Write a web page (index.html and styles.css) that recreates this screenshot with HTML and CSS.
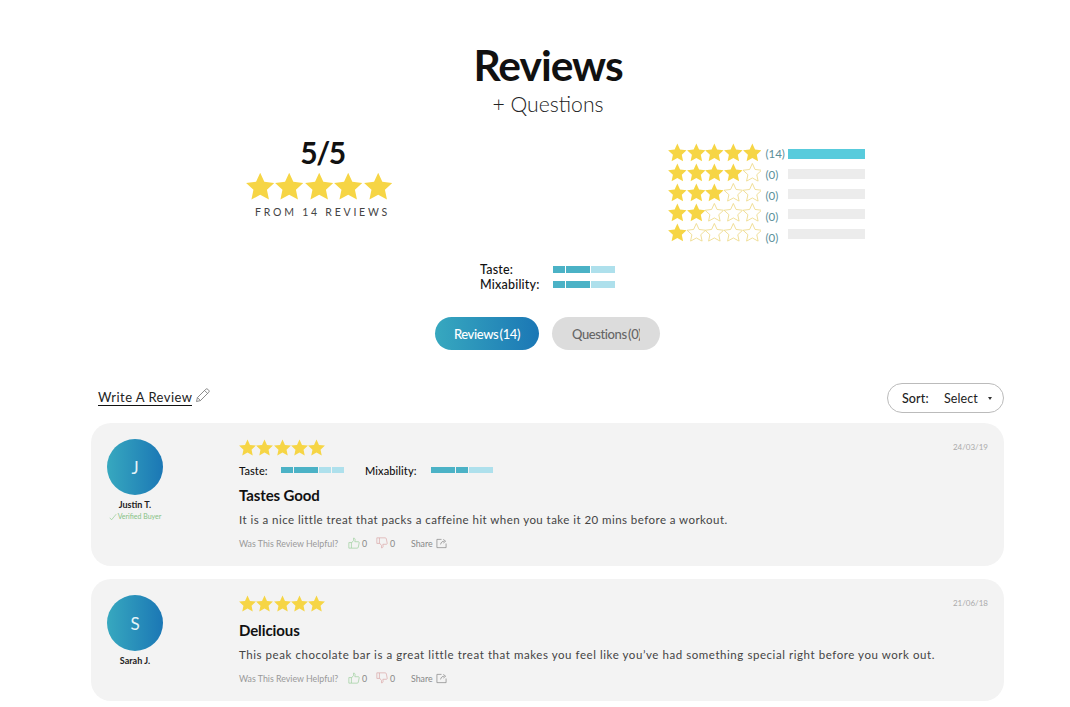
FILE: index.html
```html
<!DOCTYPE html>
<html lang="en">
<head>
<meta charset="utf-8">
<title>Reviews</title>
<link rel="stylesheet" href="styles.css">
</head>
<body>
<svg class="defs" width="0" height="0" aria-hidden="true">
  <symbol id="star" viewBox="0 0 24 24"><path d="M12 .6l3.500 7.700 8.400 1-6.200 5.700 1.700 8.300L12 19.200l-7.400 4.100 1.700-8.300L.1 9.300l8.400-1z"/></symbol>
</svg>
<main class="page">
  <header class="head">
    <h1>Reviews</h1>
    <p class="sub">+ Questions</p>
  </header>

  <section class="summary">
    <div class="score">
      <div class="score-num">5/5</div>
      <div class="stars stars-lg">
        <svg><use href="#star"/></svg><svg><use href="#star"/></svg><svg><use href="#star"/></svg><svg><use href="#star"/></svg><svg><use href="#star"/></svg>
      </div>
      <div class="score-from">FROM 14 REVIEWS</div>
    </div>
    <div class="hist">
      <div class="hist-row">
        <div class="stars stars-md"><svg><use href="#star"/></svg><svg><use href="#star"/></svg><svg><use href="#star"/></svg><svg><use href="#star"/></svg><svg><use href="#star"/></svg></div>
        <span class="count">(14)</span><span class="track full"></span>
      </div>
      <div class="hist-row">
        <div class="stars stars-md"><svg><use href="#star"/></svg><svg><use href="#star"/></svg><svg><use href="#star"/></svg><svg><use href="#star"/></svg><svg class="off"><use href="#star"/></svg></div>
        <span class="count">(0)</span><span class="track"></span>
      </div>
      <div class="hist-row">
        <div class="stars stars-md"><svg><use href="#star"/></svg><svg><use href="#star"/></svg><svg><use href="#star"/></svg><svg class="off"><use href="#star"/></svg><svg class="off"><use href="#star"/></svg></div>
        <span class="count">(0)</span><span class="track"></span>
      </div>
      <div class="hist-row">
        <div class="stars stars-md"><svg><use href="#star"/></svg><svg><use href="#star"/></svg><svg class="off"><use href="#star"/></svg><svg class="off"><use href="#star"/></svg><svg class="off"><use href="#star"/></svg></div>
        <span class="count">(0)</span><span class="track"></span>
      </div>
      <div class="hist-row">
        <div class="stars stars-md"><svg><use href="#star"/></svg><svg class="off"><use href="#star"/></svg><svg class="off"><use href="#star"/></svg><svg class="off"><use href="#star"/></svg><svg class="off"><use href="#star"/></svg></div>
        <span class="count">(0)</span><span class="track"></span>
      </div>
    </div>
  </section>

  <section class="attrs">
    <div class="attr-row">
      <span class="attr-label">Taste:</span>
      <span class="seg"><i class="s12"></i><i class="s24"></i><i class="s24 lt"></i></span>
    </div>
    <div class="attr-row">
      <span class="attr-label">Mixability:</span>
      <span class="seg"><i class="s12"></i><i class="s24"></i><i class="s24 lt"></i></span>
    </div>
  </section>

  <nav class="tabs">
    <a class="tab tab-on">Reviews (14)</a>
    <a class="tab tab-off"><span class="tab-clip">Questions (0)</span></a>
  </nav>

  <div class="toolbar">
    <div class="write">
      <a class="write-link">Write A Review</a>
      <svg class="pencil" viewBox="0 0 16 16" width="15" height="15" fill="none" stroke="#777" stroke-width=".9"><path d="M1.6 14.4l1-4.200L11.400 1.400a1.600 1.600 0 0 1 2.300 0l.9.9a1.600 1.600 0 0 1 0 2.300L5.800 13.400zM2.600 10.200l3.200 3.200M10.200 2.600l3.200 3.200"/></svg>
    </div>
    <div class="sort">
      <span class="sort-label">Sort:</span>
      <span class="sort-val">Select</span>
      <span class="caret"></span>
    </div>
  </div>

  <article class="card">
    <div class="author">
      <div class="avatar">J</div>
      <div class="name">Justin T.</div>
      <div class="verified">
        <svg viewBox="0 0 10 10" width="8" height="8" fill="none" stroke="#8cc98c" stroke-width=".8"><path d="M1 6l2.200 2.500L9 1.500"/></svg>
        Verified Buyer
      </div>
    </div>
    <div class="body">
      <div class="stars stars-sm"><svg><use href="#star"/></svg><svg><use href="#star"/></svg><svg><use href="#star"/></svg><svg><use href="#star"/></svg><svg><use href="#star"/></svg></div>
      <div class="card-attrs">
        <span class="card-attr"><b class="ca-label ca-taste">Taste:</b><span class="seg seg-sm"><i class="s12"></i><i class="s24"></i><i class="s12 lt"></i><i class="s12 lt"></i></span></span>
        <span class="card-attr"><b class="ca-label ca-mix">Mixability:</b><span class="seg seg-sm"><i class="s24"></i><i class="s12"></i><i class="s24 lt"></i></span></span>
      </div>
      <h2 class="title">Tastes Good</h2>
      <p class="text text-a">It is a nice little treat that packs a caffeine hit when you take it 20 mins before a workout.</p>
      <div class="foot">
        <span class="helpful">Was This Review Helpful?</span>
        <span class="vote">
          <svg class="up" viewBox="0 0 14 14" width="12" height="12" fill="none" stroke-width=".8"><path d="M1 6.500h3v6.500H1zM4 7l2.500-3V1.200c1.200 0 1.800 1 1.800 2L8 5.500h4.200c.8 0 1 .8.800 1.500l-1 5c-.2.700-.6 1-1.200 1H4"/></svg>0
        </span>
        <span class="vote">
          <svg class="down" viewBox="0 0 14 14" width="12" height="12" fill="none" stroke-width=".8"><path d="M1 1h3v6.500H1zM4 7l2.500 3v2.800c1.200 0 1.800-1 1.800-2L8 8.500h4.200c.8 0 1-.8.800-1.500L12 2c-.2-.7-.6-1-1.200-1H4"/></svg>0
        </span>
        <span class="share">Share
          <svg viewBox="0 0 12 12" width="11" height="11" fill="none" stroke="#888" stroke-width=".8"><path d="M6 1.500H1v9h10V6M5 7c.5-2.500 2-3.500 4-3.500M8 1.500l2.500 2L8 5.500"/></svg>
        </span>
      </div>
    </div>
    <time class="date">24/03/19</time>
  </article>

  <article class="card card-2">
    <div class="author">
      <div class="avatar">S</div>
      <div class="name">Sarah J.</div>
    </div>
    <div class="body">
      <div class="stars stars-sm"><svg><use href="#star"/></svg><svg><use href="#star"/></svg><svg><use href="#star"/></svg><svg><use href="#star"/></svg><svg><use href="#star"/></svg></div>
      <h2 class="title">Delicious</h2>
      <p class="text text-b">This peak chocolate bar is a great little treat that makes you feel like you’ve had something special right before you work out.</p>
      <div class="foot">
        <span class="helpful">Was This Review Helpful?</span>
        <span class="vote">
          <svg class="up" viewBox="0 0 14 14" width="12" height="12" fill="none" stroke-width=".8"><path d="M1 6.500h3v6.500H1zM4 7l2.500-3V1.200c1.200 0 1.800 1 1.800 2L8 5.500h4.200c.8 0 1 .8.800 1.500l-1 5c-.2.700-.6 1-1.200 1H4"/></svg>0
        </span>
        <span class="vote">
          <svg class="down" viewBox="0 0 14 14" width="12" height="12" fill="none" stroke-width=".8"><path d="M1 1h3v6.500H1zM4 7l2.500 3v2.800c1.200 0 1.800-1 1.800-2L8 8.500h4.200c.8 0 1-.8.800-1.500L12 2c-.2-.7-.6-1-1.200-1H4"/></svg>0
        </span>
        <span class="share">Share
          <svg viewBox="0 0 12 12" width="11" height="11" fill="none" stroke="#888" stroke-width=".8"><path d="M6 1.500H1v9h10V6M5 7c.5-2.500 2-3.500 4-3.500M8 1.500l2.500 2L8 5.500"/></svg>
        </span>
      </div>
    </div>
    <time class="date">21/06/18</time>
  </article>
</main>
</body>
</html>
```
FILE: styles.css
```css
* { box-sizing: border-box; }
html, body { margin: 0; padding: 0; background: #fff; }
body { font-family: Lato, "Open Sans", "Liberation Sans", sans-serif; color: #111; overflow: hidden; height: 707px; }
.defs { position: absolute; }
.page { width: 1070px; padding-top: 39px; }

.head { text-align: center; padding-left: 26px; }
h1 { margin: 0; font-size: 42.500px; line-height: 52px; font-weight: 700; letter-spacing: -1px; color: #111; }
.sub { margin: 0; font-size: 21.200px; line-height: 26px; font-weight: 300; color: #222; }

.summary { display: flex; padding-left: 246px; margin-top: 14px; }
.score { width: 146px; text-align: center; }
.score-num { font-size: 30px; line-height: 38px; font-weight: 700; letter-spacing: -1.500px; color: #111; margin-top: 2px; padding-left: 7px; }
.score-from { font-size: 10.500px; line-height: 14px; letter-spacing: 2.770px; color: #444; margin-top: 4px; padding-left: 7px; white-space: nowrap; }

.stars { display: flex; }
.stars svg { display: block; fill: #f6d545; }
.stars svg.off { fill: #fff; stroke: #ecd67e; stroke-width: 1; }
.stars-lg { gap: 1px; height: 29px; margin-top: 1px; }
.stars-lg svg { width: 28.400px; height: 28.400px; }
.stars-md { gap: 0; margin-top: -3px; }
.stars-md svg { width: 18.700px; height: 18.700px; }
.stars-sm { gap: .3px; }
.stars-sm svg { width: 17px; height: 17px; }

.hist { margin-left: 276px; margin-top: 13px; }
.hist-row { display: flex; align-items: center; height: 20px; }
.count { width: 22.500px; margin-left: 4px; font-size: 11.500px; color: #5a8f9a; white-space: nowrap; }
.hist-row:nth-child(1) .count { margin-top: -1px; }
.hist-row:nth-child(2) .count { margin-top: 1px; }
.hist-row:nth-child(3) .count { margin-top: 3px; }
.hist-row:nth-child(4) .count { margin-top: 4px; }
.hist-row:nth-child(5) .count { margin-top: 6px; }
.track { width: 77px; height: 10px; background: #ececec; }
.track.full { background: #58cbdc; }

.attrs { margin-top: 18px; padding-left: 480px; }
.attr-row { display: flex; align-items: center; height: 15px; }
.attr-label { width: 73px; font-size: 12.500px; font-weight: 500; letter-spacing: .2px; color: #111; }
.seg { display: flex; gap: 1px; }
.seg i { display: block; height: 7px; background: #4bb2c6; }
.seg i.lt { background: #aee0ec; }
.seg i.s12 { width: 12px; }
.seg i.s24 { width: 24px; }
.seg-sm i { height: 6px; }

.tabs { display: flex; gap: 13px; padding-left: 435px; margin-top: 25px; }
.tab { display: flex; align-items: center; justify-content: center; height: 33px; border-radius: 17px; font-size: 13px; font-weight: 500; letter-spacing: -.4px; word-spacing: -1.500px; white-space: nowrap; }
.tab-on { width: 104px; color: #fff; background: linear-gradient(90deg, #37a8bf, #1b77b5); }
.tab-off { width: 108px; color: #666; background: #dcdcdc; }
.tab-clip { display: block; width: 68px; overflow: hidden; }

.toolbar { display: flex; align-items: center; justify-content: space-between; margin: 33px 66px 0 98px; height: 30px; }
.write { display: flex; align-items: flex-start; gap: 3px; }
.write-link { font-size: 13px; line-height: 15px; letter-spacing: .45px; color: #222; border-bottom: 1px solid #111; }
.pencil { margin-top: -2px; }
.sort { display: flex; align-items: center; width: 117px; height: 30px; padding-left: 14px; border: 1px solid #bbb; border-radius: 15px; font-size: 12.500px; color: #222; }
.sort-label { width: 42px; font-weight: 500; letter-spacing: .1px; }
.sort-val { width: 44px; letter-spacing: .1px; }
.caret { width: 0; height: 0; border-left: 2.500px solid transparent; border-right: 2.500px solid transparent; border-top: 3px solid #333; }

.card { position: relative; display: flex; width: 913px; height: 143px; margin: 10px 0 0 91px; background: #f3f3f3; border-radius: 20px; }
.card-2 { height: 122px; margin-top: 13px; }
.author { width: 148px; padding: 16px 0 0 16px; flex: none; }
.avatar { width: 56px; height: 56px; border-radius: 50%; display: flex; align-items: center; justify-content: center; font-size: 17px; font-weight: 400; color: #e6f4f8; background: linear-gradient(90deg, #37a8bf, #1b77b5); }
.name { width: 56px; margin-top: 4px; text-align: center; font-size: 9px; line-height: 11px; font-weight: 700; color: #222; white-space: nowrap; }
.verified { width: 56px; margin-top: 2px; display: flex; justify-content: center; align-items: center; gap: 1px; font-size: 7px; line-height: 9px; color: #85c285; white-space: nowrap; }
.body { padding-top: 16px; flex: 1; }
.card-attrs { display: flex; margin-top: 7px; height: 14px; align-items: center; }
.card-attr { display: flex; align-items: center; }
.ca-label { font-size: 11px; font-weight: 500; letter-spacing: .1px; color: #111; white-space: nowrap; }
.ca-taste { width: 42px; }
.ca-mix { width: 66px; }
.card-attr + .card-attr { margin-left: 21px; }
.title { margin: 8px 0 0; font-size: 15px; line-height: 20px; font-weight: 700; letter-spacing: -.1px; color: #111; }
.text { margin: 7px 0 0; font-size: 11.500px; line-height: 16px; color: #444; white-space: nowrap; }
.text-a { letter-spacing: .45px; }
.text-b { letter-spacing: .56px; }
.foot { display: flex; align-items: center; margin-top: 8px; height: 14px; font-size: 8.800px; color: #999; }
.helpful { width: 109px; white-space: nowrap; }
.vote { display: flex; align-items: center; gap: 2px; width: 28px; color: #888; }
.vote svg.up { stroke: #9ccf9c; }
.vote svg.down { stroke: #dba5a5; }
.share { display: flex; align-items: center; gap: 3px; margin-left: 7px; color: #888; }
.date { position: absolute; top: 19px; right: 16px; font-size: 8px; color: #aaa; }
```
